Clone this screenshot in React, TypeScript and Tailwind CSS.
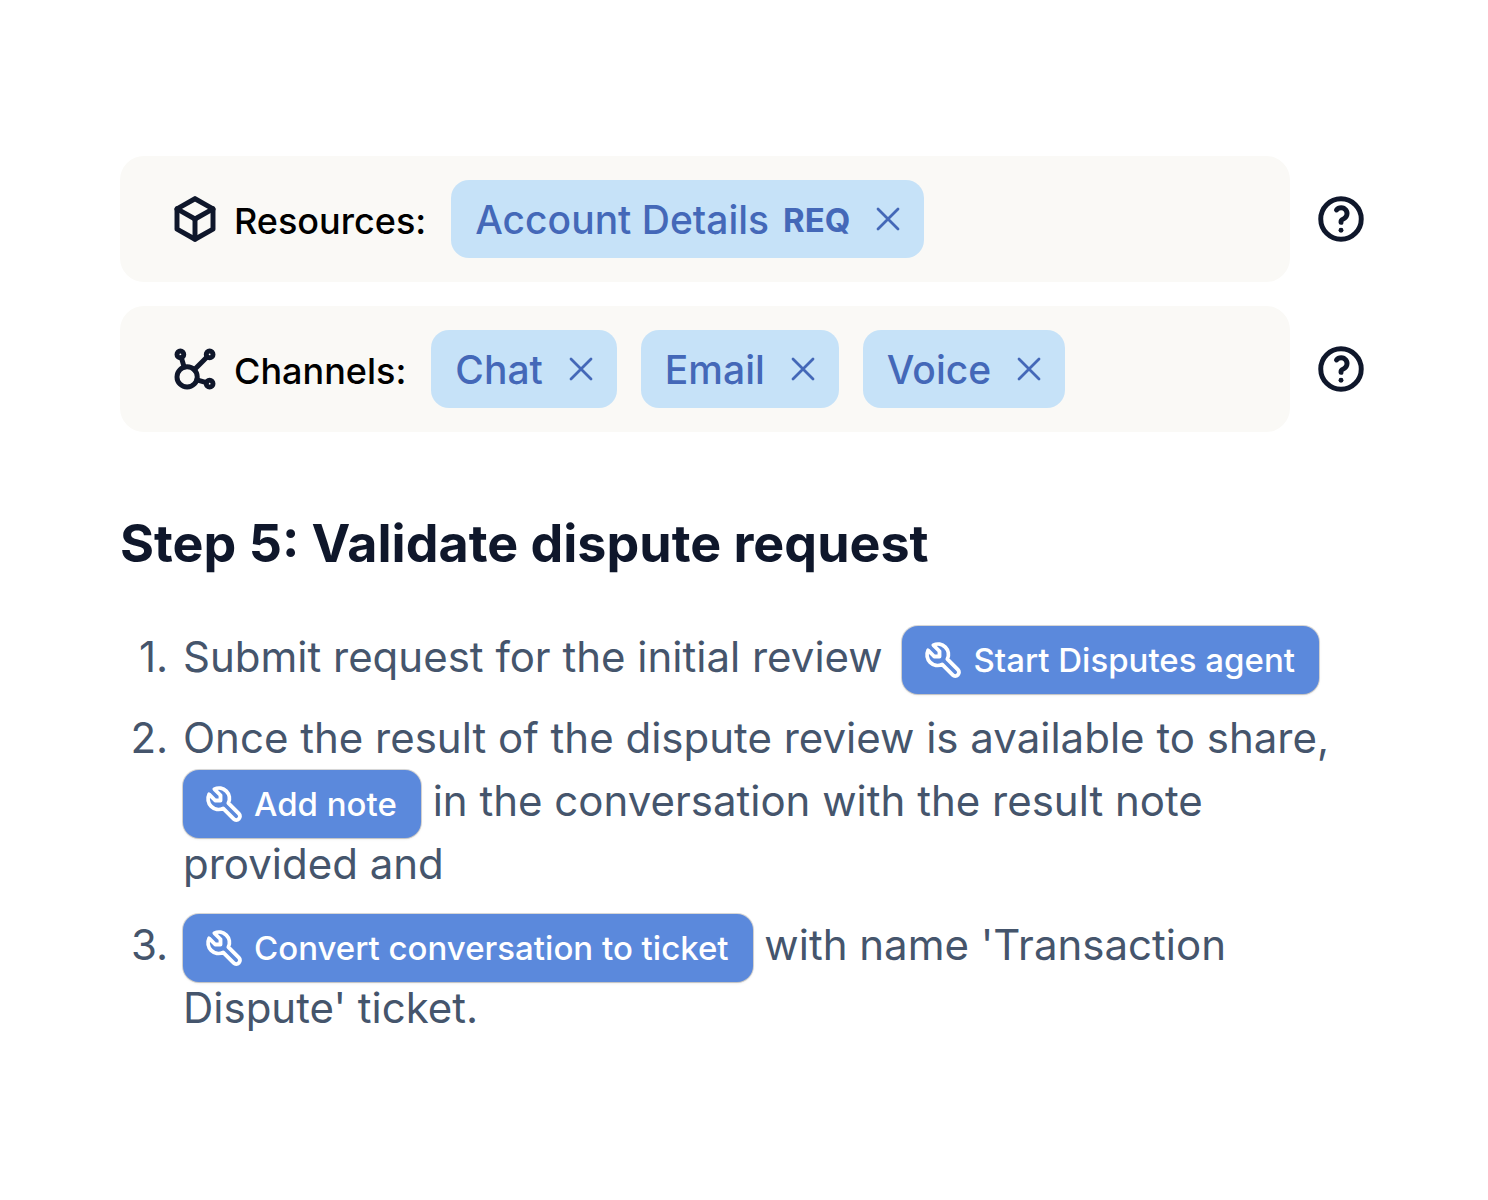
import type { ReactNode } from "react";
import { TbAffiliate, TbBox, TbHelp, TbTool } from "react-icons/tb";

interface ChipProps {
  label: string;
  required?: boolean;
}

interface SettingRowProps {
  icon: ReactNode;
  label: string;
  children: ReactNode;
}

const channels = ["Chat", "Email", "Voice"];

function CloseIcon() {
  return (
    <svg className="size-6" viewBox="0 0 24 24" fill="none" stroke="currentColor" strokeWidth="2.8" strokeLinecap="round">
      <path d="M2 2l20 20M22 2L2 22" />
    </svg>
  );
}

function Chip({ label, required }: ChipProps) {
  return (
    <div className="flex h-[78px] items-center rounded-[18px] bg-[#c6e2f8] px-6 text-[39px] font-medium text-[#4468b8]">
      <span className="pt-0.5">{label}</span>
      {required && <span className="ml-3.5 pt-1 text-[33px] font-bold">REQ</span>}
      <button type="button" aria-label={`Remove ${label}`} className="ml-[26px]">
        <CloseIcon />
      </button>
    </div>
  );
}

function SettingRow({ icon, label, children }: SettingRowProps) {
  return (
    <div className="flex items-center gap-6">
      <div className="flex flex-1 items-center gap-[25px] rounded-3xl bg-[#faf9f6] py-6 pr-6 pl-12">
        <div className="flex items-center gap-3">
          <span className="text-[54px] text-slate-900">{icon}</span>
          <span className="pt-1 text-[36px] font-medium text-black">{label}:</span>
        </div>
        {children}
      </div>
      <button type="button" aria-label={`Help for ${label}`} className="text-[54px] text-slate-900">
        <TbHelp strokeWidth="2.2" />
      </button>
    </div>
  );
}

function ActionButton({ children }: { children: ReactNode }) {
  return (
    <button
      type="button"
      className="-mt-[13px] -mb-[11px] inline-flex h-[68px] items-center gap-[9px] rounded-2xl bg-[#5b89dc] pr-6 pl-5 align-middle text-[33px] leading-10 font-medium text-white shadow-sm ring-1 ring-black/15"
    >
      <TbTool className="size-[42px]" strokeWidth="2.2" />
      {children}
    </button>
  );
}

export default function App() {
  return (
    <main className="min-h-screen bg-white px-[120px] py-[156px] font-['Inter',sans-serif]">
      <section className="flex flex-col gap-6">
        <SettingRow icon={<TbBox strokeWidth="2.2" />} label="Resources">
          <Chip label="Account Details" required />
        </SettingRow>
        <SettingRow icon={<TbAffiliate strokeWidth="2.2" />} label="Channels">
          <div className="flex gap-6">
            {channels.map((channel) => (
              <Chip key={channel} label={channel} />
            ))}
          </div>
        </SettingRow>
      </section>

      <h1 className="mt-20 text-[52px] leading-[64px] font-bold text-slate-900">Step 5: Validate dispute request</h1>

      <ol className="mt-[49px] flex list-decimal flex-col gap-[18px] pl-15 text-[42px] leading-[63px] text-slate-600 marker:normal-nums">
        <li className="pl-[3px]">
          <span className="mr-2">Submit request for the initial review</span>{" "}
          <ActionButton>Start Disputes agent</ActionButton>
        </li>
        <li className="pl-[3px]">
          Once the result of the dispute review is available to share, <ActionButton>Add note</ActionButton> in the
          conversation with the result note provided and
        </li>
        <li className="pl-[3px]">
          <ActionButton>Convert conversation to ticket</ActionButton> with name 'Transaction Dispute' ticket.
        </li>
      </ol>
    </main>
  );
}
